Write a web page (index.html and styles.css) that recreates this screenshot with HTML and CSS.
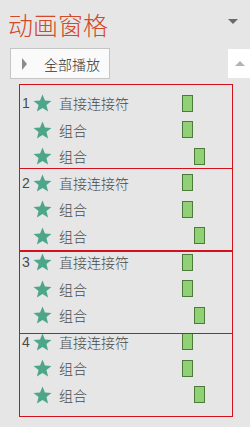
FILE: index.html
```html
<!DOCTYPE html>
<html lang="zh">
<head>
<meta charset="utf-8">
<link rel="stylesheet" href="styles.css">
</head>
<body>
<div class="pane">
  <div class="titlebar">
    <h1 class="title">动画窗格</h1>
    <span class="caret"></span>
  </div>
  <div class="toolbar">
    <button class="play-all"><span class="play-tri"></span><span class="play-label">全部播放</span></button>
    <div class="scroll-up"><span class="up-tri"></span></div>
  </div>
  <div class="list">
    <div class="row"><span class="num">1</span><svg class="star" viewBox="0 0 20 19"><path d="M10 0.5l2.6 6.4 6.9.4-5.3 4.4 1.7 6.7L10 14.7l-5.9 3.7 1.7-6.7L.5 7.3l6.9-.4z"/></svg><span class="name">直接连接符</span><span class="bar"></span></div>
    <div class="row"><span class="num"></span><svg class="star" viewBox="0 0 20 19"><path d="M10 0.5l2.6 6.4 6.9.4-5.3 4.4 1.7 6.7L10 14.7l-5.9 3.7 1.7-6.7L.5 7.3l6.9-.4z"/></svg><span class="name">组合</span><span class="bar"></span></div>
    <div class="row"><span class="num"></span><svg class="star" viewBox="0 0 20 19"><path d="M10 0.5l2.6 6.4 6.9.4-5.3 4.4 1.7 6.7L10 14.7l-5.9 3.7 1.7-6.7L.5 7.3l6.9-.4z"/></svg><span class="name">组合</span><span class="bar later"></span></div>

    <div class="row"><span class="num">2</span><svg class="star" viewBox="0 0 20 19"><path d="M10 0.5l2.6 6.4 6.9.4-5.3 4.4 1.7 6.7L10 14.7l-5.9 3.7 1.7-6.7L.5 7.3l6.9-.4z"/></svg><span class="name">直接连接符</span><span class="bar"></span></div>
    <div class="row"><span class="num"></span><svg class="star" viewBox="0 0 20 19"><path d="M10 0.5l2.6 6.4 6.9.4-5.3 4.4 1.7 6.7L10 14.7l-5.9 3.7 1.7-6.7L.5 7.3l6.9-.4z"/></svg><span class="name">组合</span><span class="bar"></span></div>
    <div class="row"><span class="num"></span><svg class="star" viewBox="0 0 20 19"><path d="M10 0.5l2.6 6.4 6.9.4-5.3 4.4 1.7 6.7L10 14.7l-5.9 3.7 1.7-6.7L.5 7.3l6.9-.4z"/></svg><span class="name">组合</span><span class="bar later"></span></div>

    <div class="row"><span class="num">3</span><svg class="star" viewBox="0 0 20 19"><path d="M10 0.5l2.6 6.4 6.9.4-5.3 4.4 1.7 6.7L10 14.7l-5.9 3.7 1.7-6.7L.5 7.3l6.9-.4z"/></svg><span class="name">直接连接符</span><span class="bar"></span></div>
    <div class="row"><span class="num"></span><svg class="star" viewBox="0 0 20 19"><path d="M10 0.5l2.6 6.4 6.9.4-5.3 4.4 1.7 6.7L10 14.7l-5.9 3.7 1.7-6.7L.5 7.3l6.9-.4z"/></svg><span class="name">组合</span><span class="bar"></span></div>
    <div class="row"><span class="num"></span><svg class="star" viewBox="0 0 20 19"><path d="M10 0.5l2.6 6.4 6.9.4-5.3 4.4 1.7 6.7L10 14.7l-5.9 3.7 1.7-6.7L.5 7.3l6.9-.4z"/></svg><span class="name">组合</span><span class="bar later"></span></div>

    <div class="row"><span class="num">4</span><svg class="star" viewBox="0 0 20 19"><path d="M10 0.5l2.6 6.4 6.9.4-5.3 4.4 1.7 6.7L10 14.7l-5.9 3.7 1.7-6.7L.5 7.3l6.9-.4z"/></svg><span class="name">直接连接符</span><span class="bar"></span></div>
    <div class="row"><span class="num"></span><svg class="star" viewBox="0 0 20 19"><path d="M10 0.5l2.6 6.4 6.9.4-5.3 4.4 1.7 6.7L10 14.7l-5.9 3.7 1.7-6.7L.5 7.3l6.9-.4z"/></svg><span class="name">组合</span><span class="bar"></span></div>
    <div class="row"><span class="num"></span><svg class="star" viewBox="0 0 20 19"><path d="M10 0.5l2.6 6.4 6.9.4-5.3 4.4 1.7 6.7L10 14.7l-5.9 3.7 1.7-6.7L.5 7.3l6.9-.4z"/></svg><span class="name">组合</span><span class="bar later"></span></div>

    <div class="frame f1"></div>
    <div class="frame f2"></div>
    <div class="frame f3"></div>
    <div class="frame f4"></div>
  </div>
</div>
</body>
</html>
```
FILE: styles.css
```css
html, body {
  margin: 0;
  padding: 0;
}
body {
  width: 250px;
  height: 427px;
  overflow: hidden;
  background: #e6e6e6;
  font-family: "Noto Sans CJK SC", "Liberation Sans", sans-serif;
  color: #4a4a4a;
}
.pane {
  display: flex;
  flex-direction: column;
}
.titlebar {
  display: flex;
  align-items: center;
  justify-content: space-between;
  height: 30px;
  padding: 9px 12px 0 8px;
}
.title {
  margin: 0;
  font-size: 25px;
  line-height: 30px;
  font-weight: 300;
  color: #d24a2c;
  letter-spacing: 0;
}
.caret {
  width: 0;
  height: 0;
  border-left: 5px solid transparent;
  border-right: 5px solid transparent;
  border-top: 5px solid #6a6a6a;
  margin-top: -5px;
}
.toolbar {
  display: flex;
  justify-content: space-between;
  align-items: flex-start;
  margin-top: 9px;
  padding-left: 10px;
}
.play-all {
  display: flex;
  align-items: center;
  width: 100px;
  height: 31px;
  margin: 0;
  padding: 0 0 0 11px;
  box-sizing: border-box;
  border: 1px solid #c5c5c5;
  background: #fafafa;
  font-family: "Noto Sans CJK SC", sans-serif;
  font-size: 14px;
  font-weight: 300;
  color: #333333;
}
.play-tri {
  width: 0;
  height: 0;
  border-top: 6px solid transparent;
  border-bottom: 6px solid transparent;
  border-left: 5px solid #8c8c8c;
}
.play-label {
  margin-left: 17px;
  line-height: 18px;
}
.scroll-up {
  display: flex;
  align-items: center;
  justify-content: center;
  width: 22px;
  height: 29px;
  margin-top: 1px;
  background: #ffffff;
}
.up-tri {
  width: 0;
  height: 0;
  border-left: 5px solid transparent;
  border-right: 5px solid transparent;
  border-bottom: 5px solid #b3b3b3;
  margin-left: 2px;
}
.list {
  position: relative;
  margin-top: 11px;
}
.row {
  display: flex;
  align-items: center;
  height: 26.5px;
  padding-left: 22px;
}
.num {
  width: 11px;
  font-family: "Liberation Sans", sans-serif;
  font-size: 14px;
  color: #4a4a4a;
}
.star {
  width: 19px;
  height: 18px;
  fill: #4ea68a;
}
.name {
  width: 123px;
  margin-left: 7px;
  font-size: 14px;
  line-height: 18px;
  font-weight: 300;
  color: #4a4a4a;
}
.bar {
  width: 11px;
  height: 17px;
  box-sizing: border-box;
  border: 1.5px solid #4c7a3a;
  background: #91d175;
}
.bar.later {
  margin-left: 12px;
}
.frame {
  position: absolute;
  left: 19px;
  width: 214px;
  box-sizing: border-box;
  border: 1px solid #d3101e;
  pointer-events: none;
}
.f1 { top: -6px; height: 85px; }
.f2 { top: 78px; height: 83px; }
.f3 { top: 161px; height: 83px; }
.f4 { top: 243px; height: 84px; }
```
